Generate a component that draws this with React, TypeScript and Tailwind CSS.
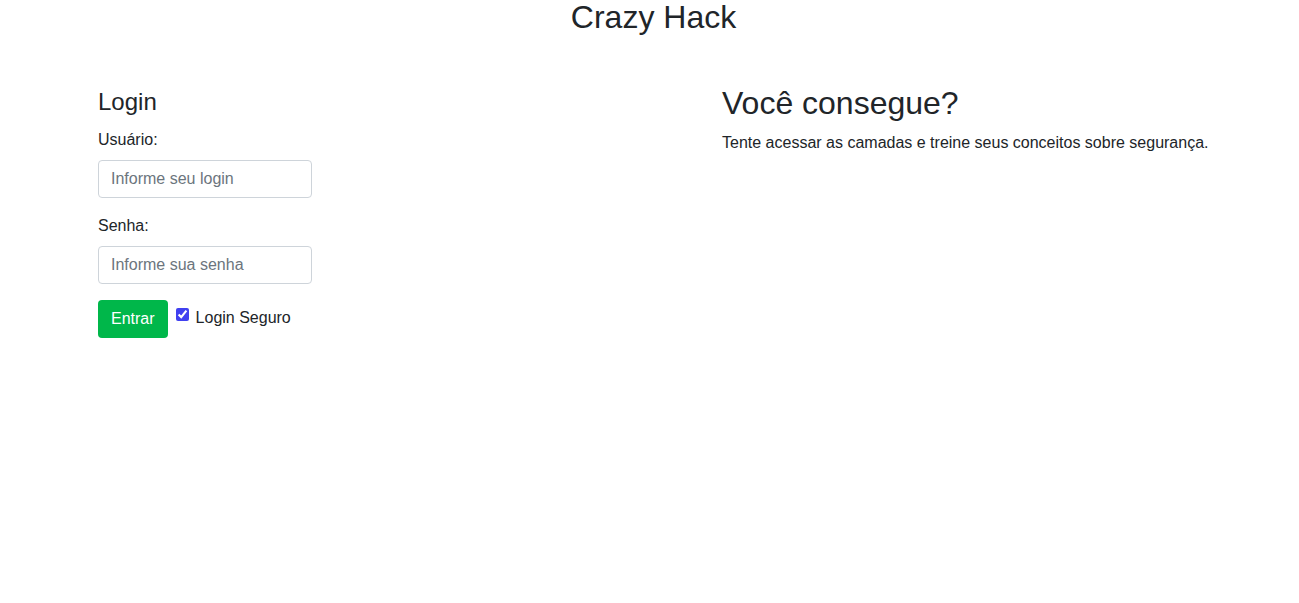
import { useState } from 'react';

export default function App() {
  const [login, setLogin] = useState('');
  const [senha, setSenha] = useState('');
  const [seguro, setSeguro] = useState(true);

  return (
    <div className="min-h-screen bg-white text-[#212529] font-['Liberation_Sans',Arial,sans-serif] text-base leading-6">
      {/* Título */}
      <h2 className="text-center text-[32px] leading-[1.2] font-normal -mt-[2px] pl-[8px]">Crazy Hack</h2>

      <div className="flex pl-[98px] mt-[52px]">
        {/* Login */}
        <div className="w-[624px]">
          <h4 className="text-[24px] leading-[1.2] font-normal">Login</h4>
          <form onSubmit={(e) => e.preventDefault()}>
            <label className="block mt-[11px] mb-[8px]">Usuário:</label>
            <input
              type="text"
              value={login}
              onChange={(e) => setLogin(e.target.value)}
              placeholder="Informe seu login"
              className="block w-[214px] h-[38px] px-3 border border-[#ced4da] rounded-[4px] placeholder:text-[#6c757d] outline-none"
            />
            <label className="block mt-[16px] mb-[8px]">Senha:</label>
            <input
              type="password"
              value={senha}
              onChange={(e) => setSenha(e.target.value)}
              placeholder="Informe sua senha"
              className="block w-[214px] h-[38px] px-3 border border-[#ced4da] rounded-[4px] placeholder:text-[#6c757d] outline-none"
            />
            <div className="flex items-center mt-[16px]">
              <button
                type="submit"
                className="h-[38px] px-[13px] bg-[#00b74a] text-white rounded-[4px]"
              >
                Entrar
              </button>
              <label className="flex items-center ml-[8px] -mt-[2px]">
                <input
                  type="checkbox"
                  checked={seguro}
                  onChange={(e) => setSeguro(e.target.checked)}
                  className="w-[13px] h-[13px] m-0 mr-[7px] -mt-[8px] accent-[#4040f0]"
                />
                Login Seguro
              </label>
            </div>
          </form>
        </div>

        {/* Descrição */}
        <div>
          <h2 className="text-[32px] leading-[1.2] font-normal -mt-[4px]">Você consegue?</h2>
          <p className="mt-[8px]">Tente acessar as camadas e treine seus conceitos sobre segurança.</p>
        </div>
      </div>
    </div>
  );
}
